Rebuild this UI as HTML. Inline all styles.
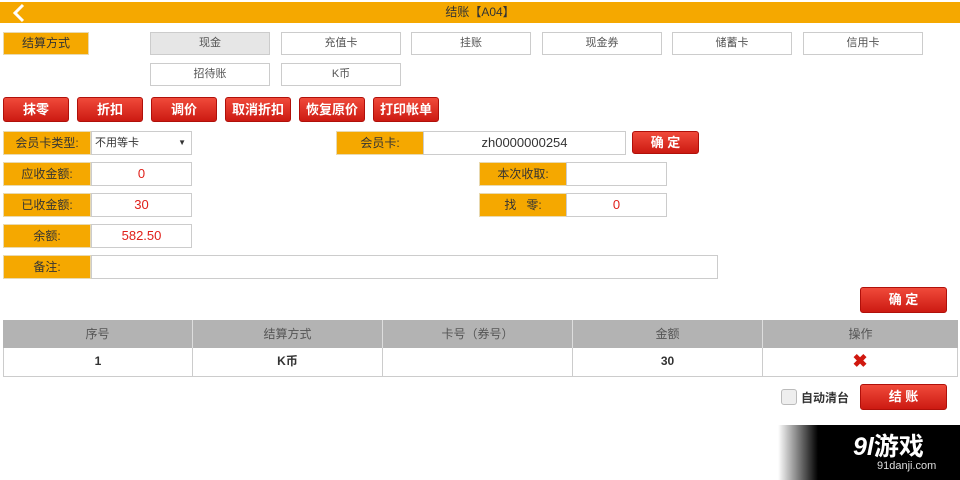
<!DOCTYPE html><html><head><meta charset="utf-8"><style>
*{margin:0;padding:0;box-sizing:border-box}
body{width:960px;height:480px;background:#fff;position:relative;overflow:hidden;font-family:"Liberation Sans","Noto Sans CJK SC",sans-serif;font-size:12px;color:#333}
.a{position:absolute}
.hd{left:0;top:2px;width:960px;height:21px;background:#f5a800;color:#333;text-align:center;line-height:21px;font-size:12px}
.lb{background:#f5a800;color:#333;text-align:center;font-size:12px;border:1px solid #e8d9b0}
.pb{border:1px solid #ccc;background:#fff;text-align:center;line-height:21px;font-size:11px;color:#555}
.rb{background:linear-gradient(#f04a3a,#cc1a12);color:#fff;font-weight:bold;text-align:center;border-radius:3px;font-size:13px;border:1px solid #b0100a}
.in{border:1px solid #ccc;background:#fff;text-align:center;color:#e0201a;font-size:13px}
.th{background:#b3b3b3;color:#555;text-align:center;line-height:28px;font-size:12px;border-right:1px solid #ddd}
.td{background:#fff;text-align:center;line-height:27px;font-weight:bold;font-size:12px;color:#333;border-right:1px solid #ccc;border-bottom:1px solid #ccc}
</style></head><body>
<div class="a hd">结账【A04】</div>
<svg class="a" style="left:10px;top:3px" width="16" height="20"><path d="M13 2 L5 10 L13 18" stroke="#fff" stroke-width="3" fill="none"/></svg>
<div class="a lb" style="left:3px;top:32px;width:86px;height:23px;line-height:21px">结算方式</div>
<div class="a pb" style="left:150px;top:32px;width:120px;height:23px;background:#e6e6e6">现金</div>
<div class="a pb" style="left:281px;top:32px;width:120px;height:23px">充值卡</div>
<div class="a pb" style="left:411px;top:32px;width:120px;height:23px">挂账</div>
<div class="a pb" style="left:542px;top:32px;width:120px;height:23px">现金券</div>
<div class="a pb" style="left:672px;top:32px;width:120px;height:23px">储蓄卡</div>
<div class="a pb" style="left:803px;top:32px;width:120px;height:23px">信用卡</div>
<div class="a pb" style="left:150px;top:63px;width:120px;height:23px">招待账</div>
<div class="a pb" style="left:281px;top:63px;width:120px;height:23px">K币</div>
<div class="a rb" style="left:3px;top:97px;width:66px;height:25px;line-height:23px">抹零</div>
<div class="a rb" style="left:77px;top:97px;width:66px;height:25px;line-height:23px">折扣</div>
<div class="a rb" style="left:151px;top:97px;width:66px;height:25px;line-height:23px">调价</div>
<div class="a rb" style="left:225px;top:97px;width:66px;height:25px;line-height:23px">取消折扣</div>
<div class="a rb" style="left:299px;top:97px;width:66px;height:25px;line-height:23px">恢复原价</div>
<div class="a rb" style="left:373px;top:97px;width:66px;height:25px;line-height:23px">打印帐单</div>
<div class="a lb" style="left:3px;top:131px;width:88px;height:24px;line-height:22px">会员卡类型:</div>
<div class="a in" style="left:91px;top:131px;width:101px;height:24px;line-height:22px;color:#333;font-size:11px;text-align:left;padding-left:3px">不用等卡<span style="position:absolute;right:5px;font-size:8px">▼</span></div>
<div class="a lb" style="left:336px;top:131px;width:88px;height:24px;line-height:22px">会员卡:</div>
<div class="a in" style="left:423px;top:131px;width:203px;height:24px;line-height:22px;color:#333">zh0000000254</div>
<div class="a rb" style="left:632px;top:131px;width:67px;height:23px;line-height:21px">确 定</div>
<div class="a lb" style="left:3px;top:162px;width:88px;height:24px;line-height:22px">应收金额:</div>
<div class="a in" style="left:91px;top:162px;width:101px;height:24px;line-height:22px">0</div>
<div class="a lb" style="left:479px;top:162px;width:88px;height:24px;line-height:22px">本次收取:</div>
<div class="a in" style="left:566px;top:162px;width:101px;height:24px"></div>
<div class="a lb" style="left:3px;top:193px;width:88px;height:24px;line-height:22px">已收金额:</div>
<div class="a in" style="left:91px;top:193px;width:101px;height:24px;line-height:22px">30</div>
<div class="a lb" style="left:479px;top:193px;width:88px;height:24px;line-height:22px">找&nbsp;&nbsp;&nbsp;零:</div>
<div class="a in" style="left:566px;top:193px;width:101px;height:24px;line-height:22px">0</div>
<div class="a lb" style="left:3px;top:224px;width:88px;height:24px;line-height:22px">余额:</div>
<div class="a in" style="left:91px;top:224px;width:101px;height:24px;line-height:22px">582.50</div>
<div class="a lb" style="left:3px;top:255px;width:88px;height:24px;line-height:22px">备注:</div>
<div class="a in" style="left:91px;top:255px;width:627px;height:24px"></div>
<div class="a rb" style="left:860px;top:287px;width:87px;height:26px;line-height:24px">确 定</div>
<div class="a" style="left:3px;top:320px;width:955px;height:57px;border:1px solid #ccc;border-top:none"></div>
<div class="a th" style="left:3px;top:320px;width:190px;height:28px">序号</div>
<div class="a th" style="left:193px;top:320px;width:190px;height:28px">结算方式</div>
<div class="a th" style="left:383px;top:320px;width:190px;height:28px">卡号（券号）</div>
<div class="a th" style="left:573px;top:320px;width:190px;height:28px">金额</div>
<div class="a th" style="left:763px;top:320px;width:195px;height:28px;border-right:none">操作</div>
<div class="a td" style="left:3px;top:348px;width:190px;height:29px;border-left:1px solid #ccc">1</div>
<div class="a td" style="left:193px;top:348px;width:190px;height:29px">K币</div>
<div class="a td" style="left:383px;top:348px;width:190px;height:29px"></div>
<div class="a td" style="left:573px;top:348px;width:190px;height:29px">30</div>
<div class="a td" style="left:763px;top:348px;width:195px;height:29px;color:#d0180f;font-size:18px">✖</div>
<div class="a" style="left:781px;top:389px;width:16px;height:16px;border:1px solid #bbb;border-radius:3px;background:#eee"></div>
<div class="a" style="left:801px;top:389px;font-size:12px;font-weight:bold;color:#333">自动清台</div>
<div class="a rb" style="left:860px;top:384px;width:87px;height:26px;line-height:24px">结 账</div>
<div class="a" style="left:778px;top:425px;width:182px;height:55px;background:linear-gradient(90deg,#fff 0,#000 40px,#000)"></div>
<div class="a" style="left:853px;top:427px;color:#fff;font-size:25px;font-weight:bold;font-style:italic">9l<span style="font-style:normal">游戏</span></div>
<div class="a" style="left:877px;top:460px;color:#ddd;font-size:11px">91danji.com</div>
</body></html>
